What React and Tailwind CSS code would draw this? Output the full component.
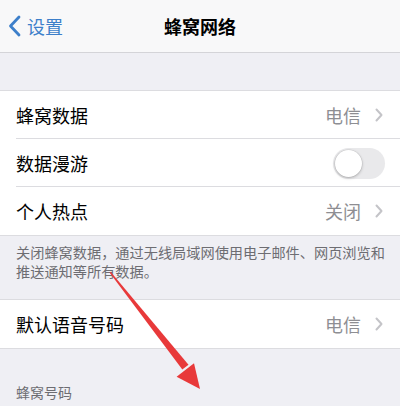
import React from "react";

const font = { fontFamily: '"Noto Sans CJK SC", "Noto Sans", sans-serif' };

function Chevron() {
  return (
    <svg width="8" height="14" viewBox="0 0 8 14" className="ml-[14px] mr-[1px]">
      <path d="M1.5 1.5 L6.5 7 L1.5 12.5" fill="none" stroke="#c4c4c8" strokeWidth="2" strokeLinecap="round" strokeLinejoin="round" />
    </svg>
  );
}

function Row({ label, value, toggle, divider }) {
  return (
    <div className="relative h-[48px] flex items-center pl-[16px] pr-[16px] bg-white">
      <span className="text-[18px] text-black flex-1 leading-none">{label}</span>
      {value && (
        <div className="flex items-center">
          <span className="text-[18px] text-[#8e8e93] leading-none">{value}</span>
          <Chevron />
        </div>
      )}
      {toggle && (
        <div className="w-[52px] h-[31px] rounded-full bg-[#e9e9eb] relative mr-[-1px]">
          <div className="absolute left-[2px] top-[2px] w-[27px] h-[27px] rounded-full bg-white shadow-[0_1px_3px_rgba(0,0,0,0.25),0_0_0_0.5px_rgba(0,0,0,0.08)]" />
        </div>
      )}
      {divider && <div className="absolute left-[16px] right-0 bottom-0 h-px bg-[#dcdce0]" />}
    </div>
  );
}

export default function App() {
  return (
    <div className="relative w-[400px] h-[406px] overflow-hidden bg-[#efeff4]" style={font}>
      {/* navigation bar */}
      <div className="h-[53px] bg-[#f8f8f9] border-b border-[#d4d4d8] flex items-center relative">
        <div className="flex items-center pl-[8px] text-[#3d7fca]">
          <svg width="13" height="22" viewBox="0 0 13 22">
            <path d="M11 2 L2.5 11 L11 20" fill="none" stroke="#3d7fca" strokeWidth="2.8" strokeLinecap="round" strokeLinejoin="round" />
          </svg>
          <span className="text-[18px] ml-[6px] leading-none">设置</span>
        </div>
        <div className="absolute inset-x-0 top-0 h-full flex items-center justify-center pointer-events-none">
          <span className="text-[18px] font-bold text-black leading-none">蜂窝网络</span>
        </div>
      </div>

      <div className="h-[37px]" />

      <div className="border-y border-[#dcdce0]">
        <Row label="蜂窝数据" value="电信" divider />
        <Row label="数据漫游" toggle divider />
        <Row label="个人热点" value="关闭" />
      </div>

      <div className="pt-[7px] pb-[18px] pl-[16px] pr-[12px] text-[14.2px] leading-[19px] text-[#6d6d72]">
        关闭蜂窝数据，通过无线局域网使用电子邮件、网页浏览和推送通知等所有数据。
      </div>

      <div className="border-y border-[#dcdce0]">
        <Row label="默认语音号码" value="电信" />
      </div>

      <div className="pt-[34px] px-[16px] text-[14px] leading-[19px] text-[#6d6d72]">蜂窝号码</div>

      {/* red annotation arrow */}
      <svg className="absolute left-0 top-0 pointer-events-none" width="400" height="406" viewBox="0 0 400 406">
        <polygon points="109.5,272.6 110.6,271.8 188.5,364.8 182.3,369.6" fill="#e8393a" />
        <polygon points="200,389 176.6,376.8 194,363.2" fill="#e8393a" />
      </svg>
    </div>
  );
}
